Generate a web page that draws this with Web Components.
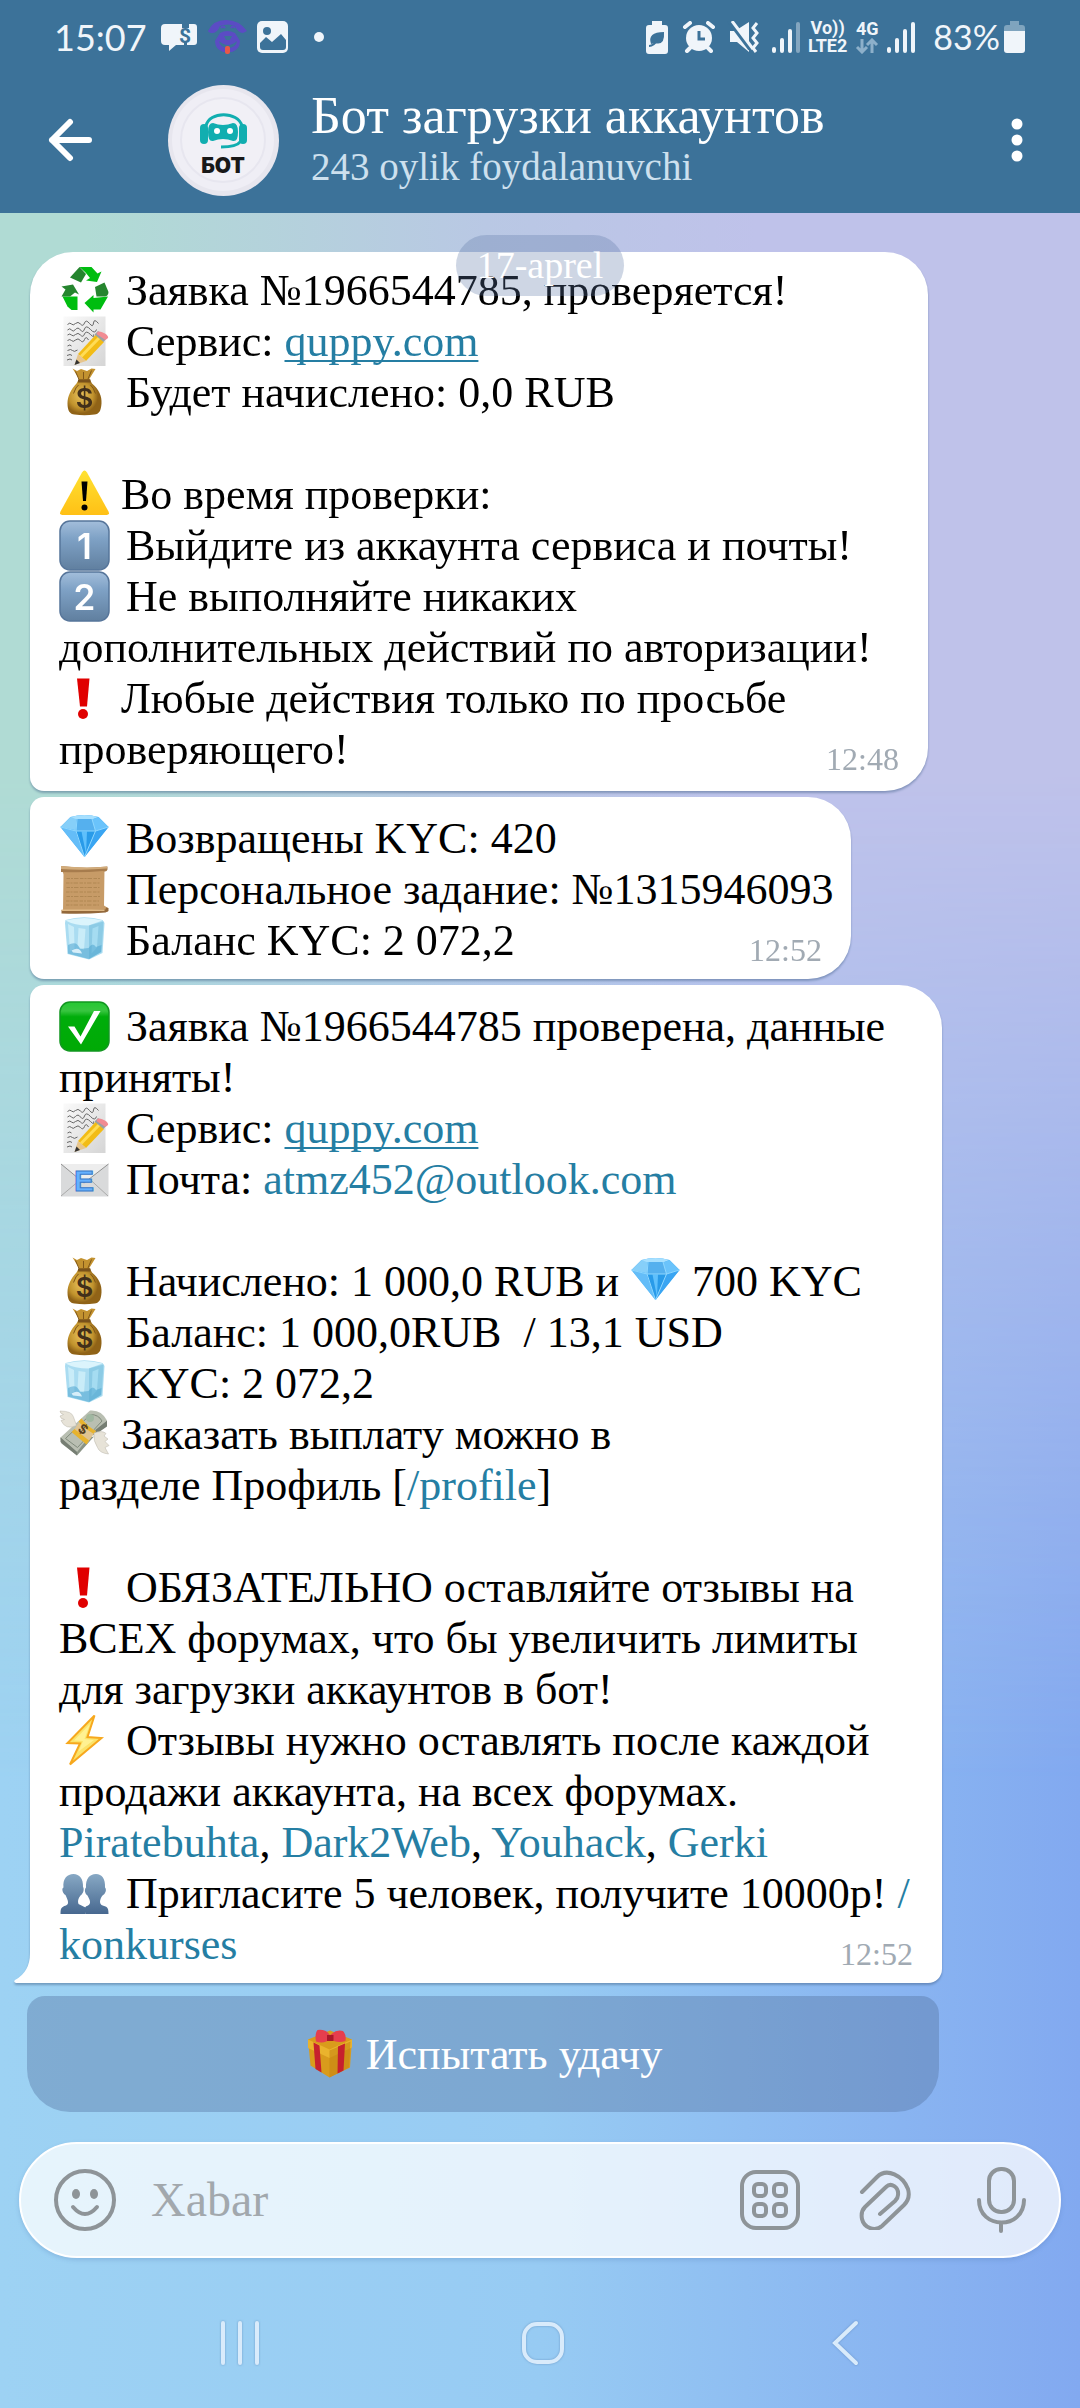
<!DOCTYPE html>
<html lang="uz">
<head>
<meta charset="utf-8">
<meta name="viewport" content="width=device-width, initial-scale=1">
<title>Бот загрузки аккаунтов</title>
<style>
html,body{margin:0}
body{font-family:"Liberation Serif",serif;color:#000}
</style>
</head>
<body>
<chat-app>
  <chat-header slot="header" name="Бот загрузки аккаунтов" status="243 oylik foydalanuvchi"></chat-header>
  <chat-history date="17-aprel">
    <chat-bubble time="12:48" style="--w:898px">
      <chat-line><emoji-icon name="recycle" wide></emoji-icon> Заявка №1966544785, проверяется!</chat-line>
      <chat-line><emoji-icon name="memo" wide></emoji-icon> Сервис: <chat-link to="http://quppy.com" underline>quppy.com</chat-link></chat-line>
      <chat-line><emoji-icon name="bag" wide></emoji-icon> Будет начислено: 0,0 RUB</chat-line>
      <chat-line></chat-line>
      <chat-line><emoji-icon name="warning"></emoji-icon> Во время проверки:</chat-line>
      <chat-line><emoji-icon name="one" wide></emoji-icon> Выйдите из аккаунта сервиса и почты!</chat-line>
      <chat-line><emoji-icon name="two" wide></emoji-icon> Не выполняйте никаких</chat-line>
      <chat-line>дополнительных действий по авторизации!</chat-line>
      <chat-line><emoji-icon name="bang"></emoji-icon> Любые действия только по просьбе</chat-line>
      <chat-line>проверяющего!</chat-line>
    </chat-bubble>
    <chat-bubble time="12:52" joined style="--w:821px">
      <chat-line><emoji-icon name="gem" wide></emoji-icon> Возвращены KYC: 420</chat-line>
      <chat-line><emoji-icon name="scroll" wide></emoji-icon> Персональное задание: №1315946093</chat-line>
      <chat-line><emoji-icon name="ice" wide></emoji-icon> Баланс KYC: 2 072,2</chat-line>
    </chat-bubble>
    <chat-bubble time="12:52" joined tail style="--w:912px">
      <chat-line><emoji-icon name="check" wide></emoji-icon> Заявка №1966544785 проверена, данные</chat-line>
      <chat-line>приняты!</chat-line>
      <chat-line><emoji-icon name="memo" wide></emoji-icon> Сервис: <chat-link to="http://quppy.com" underline>quppy.com</chat-link></chat-line>
      <chat-line><emoji-icon name="mail" wide></emoji-icon> Почта: <chat-link to="mailto:atmz452@outlook.com">atmz452@outlook.com</chat-link></chat-line>
      <chat-line></chat-line>
      <chat-line><emoji-icon name="bag" wide></emoji-icon> Начислено: 1 000,0 RUB и <emoji-icon name="gem"></emoji-icon> 700 KYC</chat-line>
      <chat-line><emoji-icon name="bag" wide></emoji-icon> Баланс: 1 000,0RUB&nbsp; / 13,1 USD</chat-line>
      <chat-line><emoji-icon name="ice" wide></emoji-icon> KYC: 2 072,2</chat-line>
      <chat-line><emoji-icon name="money"></emoji-icon> Заказать выплату можно в</chat-line>
      <chat-line>разделе Профиль [<chat-link to="#profile">/profile</chat-link>]</chat-line>
      <chat-line></chat-line>
      <chat-line><emoji-icon name="bang" wide></emoji-icon> ОБЯЗАТЕЛЬНО оставляйте отзывы на</chat-line>
      <chat-line>ВСЕХ форумах, что бы увеличить лимиты</chat-line>
      <chat-line>для загрузки аккаунтов в бот!</chat-line>
      <chat-line><emoji-icon name="bolt" wide></emoji-icon> Отзывы нужно оставлять после каждой</chat-line>
      <chat-line>продажи аккаунта, на всех форумах.</chat-line>
      <chat-line><chat-link to="#piratebuhta">Piratebuhta</chat-link>, <chat-link to="#dark2web">Dark2Web</chat-link>, <chat-link to="#youhack">Youhack</chat-link>, <chat-link to="#gerki">Gerki</chat-link></chat-line>
      <chat-line><emoji-icon name="people" wide></emoji-icon> Пригласите 5 человек, получите 10000р! <chat-link to="#konkurses">/</chat-link></chat-line>
      <chat-line><chat-link to="#konkurses">konkurses</chat-link></chat-line>
    </chat-bubble>
    <inline-button style="--w:912px"><emoji-icon name="gift"></emoji-icon> Испытать удачу</inline-button>
  </chat-history>
  <chat-composer slot="footer"></chat-composer>
  <system-nav slot="footer"></system-nav>
</chat-app>

<script>
const define = (name, html, setup) => customElements.define(name, class extends HTMLElement {
  constructor() {
    super();
    this.attachShadow({ mode: "open" });
  }
  connectedCallback() {
    this.shadowRoot.innerHTML = typeof html === "function" ? html(this) : html;
    if (setup) setup(this);
  }
});

const keycap = (n) => `<defs><linearGradient id="k" x2="0" y2="1"><stop stop-color="#a3bedb"/><stop offset=".35" stop-color="#7fa2c6"/><stop offset="1" stop-color="#607f9f"/></linearGradient></defs><rect x="1" y="1" width="98" height="98" rx="20" fill="url(#k)" stroke="#56759a" stroke-width="3"/><text x="50" y="76" text-anchor="middle" font-family="Inter,sans-serif" font-weight="600" font-size="70" fill="#fff">${n}</text>`;

/* Each picture is drawn on a 100 × 100 grid. */
const EMOJI = {
  recycle: `<g fill="#00bd10"><path d="M40 3h24l12 13 8-4-9 21-22-3 8-5-9-11-12-11z"/><path d="M6 62h30v27H24L16 82z"/><path d="M97 62L82 88H68v6L50 75l18-16v6z"/></g><g fill="#25852e"><path d="M40 3l13 14-10 17-22-10z"/><path d="M4 42l23-4 12 20-8-4-10 8H4l8-14z"/><path d="M71 43l19-9 8 19c0 5-3 9-8 9H74z"/></g>`,
  memo: `<defs><linearGradient id="m" x2="1" y2="1"><stop stop-color="#fafafa"/><stop offset="1" stop-color="#d5d5d5"/></linearGradient></defs><path d="M8 0h84v99H8z" fill="url(#m)"/><g fill="none" stroke="#666" stroke-width="2"><path d="M16 16q5-5 8-1t8-1 10 1 8-2 10 1 8-1 10 1"/><path d="M16 27q5-5 8 0t8-1 10 1 8-2 12 1 12 0"/><path d="M16 37q5-4 8 0t8-1 10 1 8-2 12 1 6 0"/><path d="M16 48q5-4 8 0t8-1 10 1 8-2 8 1"/><path d="M16 59q5-4 8 0M16 68q7-4 10 0t10-1M15 78q7-4 10 0M15 87q7-4 10 0"/></g><path d="M37 75L73 36l16 15-36 38z" fill="#f2bc16"/><path d="M43 80l37-38" stroke="#ffdc55" stroke-width="6"/><path d="M37 75l16 14-23 8z" fill="#e7c58d"/><path d="M34 86l7 7-11 4z" fill="#333"/><path d="M70 36l7-7 17 15-6 7z" fill="#9ba0a2"/><path d="M76 31c5-4 24 6 21 12l-5 4-18-12z" fill="#f18b92"/>`,
  bag: `<defs><radialGradient id="b" cx=".4" cy=".45"><stop stop-color="#e9c25b"/><stop offset=".7" stop-color="#c1932d"/><stop offset="1" stop-color="#906317"/></radialGradient></defs><path d="M26 2l9 5 8-4 12 4 9-5 8 1-13 21H40z" fill="#c3922f"/><path d="M39 23h21l5 9c14 12 20 25 19 40s-5 21-14 22q-20 3-40 0c-9-1-14-7-14-22s7-28 18-40z" fill="url(#b)"/><path d="M37 24h25v6H37z" fill="#79521b"/><path d="M39 24L32 8M48 23V9M57 23l7-17M28 52q5-14 10-17M72 52q-4-12-10-17" stroke="#805719" stroke-width="2" fill="none"/><text x="50" y="80" text-anchor="middle" font-family="Inter,sans-serif" font-weight="600" font-size="54" fill="#42301a">$</text>`,
  warning: `<defs><linearGradient id="w" x2="0" y2="1"><stop stop-color="#ffe231"/><stop offset="1" stop-color="#ffc016"/></linearGradient></defs><path d="M45 6q5-8 10 0l43 78q3 7-4 7H6q-7 0-4-7z" fill="url(#w)"/><path d="M44 24h12l-3 39h-6z"/><circle cx="50" cy="76" r="6"/>`,
  one: keycap(1),
  two: keycap(2),
  bang: `<path d="M35 10h25l-5 56H41z" fill="#e00000"/><circle cx="47" cy="81" r="10" fill="#e00000"/>`,
  gem: `<path d="M2 27L22 7q28-8 56 0l20 20-48 60z" fill="#44adf4"/><path d="M2 27L22 7l11 2 2 25z" fill="#86cff9"/><path d="M22 7q28-8 56 0L65 12H35z" fill="#a7e0ff"/><path d="M35 11h30l7 24H32z" fill="#55b0ee"/><path d="M78 7l20 20-26 8-7-23z" fill="#6ac3fb"/><path d="M2 27l31 8 17 52z" fill="#64bdf8"/><path d="M32 35h40L50 87z" fill="#299be9"/><path d="M44 36h11l-2 45z" fill="#5fc0fc"/><path d="M72 35l26-8-48 60z" fill="#3aa5f2"/><path d="M2 27l31 8h39l26-8M33 35l17 52 22-52M35 11l-2 24M65 11l7 24" fill="none" stroke="#8ed7ff" stroke-width="2"/>`,
  scroll: `<path d="M5 8h85l-1 74 8 5v7H7L8 20z" fill="#c79b67"/><path d="M3 3q48 6 93 1v6q-2 6-9 3-42 4-84 2z" fill="#a77c4d"/><path d="M3 3q48 5 92 1v4q-45 4-92 1z" fill="#d2ac7b"/><path d="M4 91q45 1 88-1l1-4 5 1v6l-6 3q-45 4-88 2z" fill="#93683a"/><path d="M4 90h86v3H4z" fill="#dfb985"/><g stroke="#b08753" stroke-width="2" stroke-dasharray="7 2 4 2 9 3"><path d="M14 28h67M13 37h68M14 46h66M13 55h68M14 64h67M13 73h66M13 81h66"/></g>`,
  ice: `<path d="M12 9Q50-2 86 9l4 6-4 60-27 13-43-11L11 15z" fill="#aadcf1"/><path d="M12 10Q50 0 86 10L58 20Q30 20 12 10z" fill="#dbf4fc"/><path d="M59 20l29-8-4 61-25 14z" fill="#8ccbe5"/><path d="M17 17l12 6 1 43-9 5zM38 25l14 2-3 42-13-7z" fill="#c9ecf8"/><path d="M66 26l12-5-3 43-11 12z" fill="#a5dcf1"/><path d="M17 59q18-10 24 8l17-2q8-13 15-2l11-4-1 14-24 14-42-11z" fill="#4fa6cf" opacity=".55"/><path d="M24 70q16-9 21 6l-18-2z" fill="#eefaff" opacity=".8"/>`,
  check: `<defs><linearGradient id="c" x2="0" y2="1"><stop stop-color="#24c832"/><stop offset=".18" stop-color="#38c540"/><stop offset=".3" stop-color="#00ad0b"/><stop offset="1" stop-color="#00aa05"/></linearGradient></defs><rect x="1" y="1" width="98" height="98" rx="20" fill="url(#c)" stroke="#129620" stroke-width="3"/><path d="M17 50h13l12 20 27-51h13L43 86z" fill="#fff"/>`,
  mail: `<path d="M3 19h95v65H3z" fill="#d9dadb"/><path d="M3 19l46 38 49-38" fill="#ededed" stroke="#929292" stroke-width="2"/><path d="M3 83l38-32M97 83L60 49" stroke="#aaa" stroke-width="2"/><g font-family="Liberation Sans,sans-serif" font-weight="700" font-size="60" text-anchor="middle"><text x="49" y="72" fill="#65b1ff" stroke="#3979c9" stroke-width="2">E</text></g>`,
  money: `<path d="M40 60L2 56l2 12 31 24 34-38z" fill="#8a9386"/><path d="M2 56L61 2q23-2 34 20L64 48 35 85z" fill="#b9bfb2"/><path d="M95 22v12L69 52l-5-5zM2 56l33 29v7L2 65z" fill="#767e73"/><path d="M12 58L62 10q16 0 23 13L36 76z" fill="none" stroke="#818c7d" stroke-width="2"/><circle cx="61" cy="17" r="8" fill="#a0b7a1"/><path d="M44 18q13 17 29 25L55 68 27 44z" fill="#dfc491"/><path d="M44 18q13 17 29 25l-4 6Q51 39 38 24zM30 39l29 23-5 8-30-25z" fill="#e6b32e"/><text x="46" y="50" transform="rotate(35 49 42)" font-family="Inter,sans-serif" font-weight="700" font-size="26" fill="#554020" text-anchor="middle">$</text><g fill="#e7e3d8" stroke="#b9b4a9"><path d="M1 3q24 0 27 12l6 17Q12 42 3 22l7-2Q2 19 1 13l7-3Q1 8 1 3z"/><path d="M69 47q17-6 24 1l-4 5 8 6-6 5 8 8-8 4 7 13q-18-2-22-13-9-13-7-29z"/></g>`,
  bolt: `<path d="M70 0L16 55l25 1L21 98l63-53-28-2z" fill="#fbe36a" stroke="#f7a81d" stroke-width="4"/><path d="M61 17L29 50l18 1-9 21 31-23-19-2z" fill="#fff192"/>`,
  people: `<defs><linearGradient id="p" gradientUnits="userSpaceOnUse" x1="0" y1="10" x2="0" y2="91"><stop stop-color="#88a9c5"/><stop offset="1" stop-color="#47688f"/></linearGradient></defs><g fill="url(#p)"><path d="M28 11c-13 0-22 10-20 27-5 2-1 13 4 15 5 11 8 18 1 21C3 77 2 80 2 91h50V78L38 71c-2-5-1-11 4-17 6-4 8-13 5-17 1-16-7-26-19-26z"/><path d="M73 11c-13 0-21 10-20 27-4 4-2 13 3 16 5 9 8 16 1 20-6 2-8 4-5 17h46c0-15-3-14-14-18-5-5-3-12 2-19 6-3 9-12 5-16 1-17-6-27-18-27z"/></g>`,
  gift: `<path d="M7 20l44-18 44 18-4 56-41 20-38-24z" fill="#d99b1c"/><path d="M7 20l43 20 45-20v16L50 57 7 37z" fill="#eab32d"/><path d="M50 42l42-18-3 52-39 20z" fill="#c78612" opacity=".6"/><path d="M18 26l12 6 4 54-12-7zM67 34l14-6-3 54-12 6z" fill="#c6202d"/><path d="M26 1q18-2 25 11Q63-1 77 3q7 7 5 20-18 6-30-5-12 12-29 6-3-15 3-23z" fill="#e63e4d"/><path d="M45 11h13v12H45z" fill="#ab1829"/>`
};

define("emoji-icon", (el) => `<style>
:host{display:inline-block;width:51px;height:51px;vertical-align:top}
:host([wide]){margin-right:5px}
svg{display:block;width:100%;height:100%}
</style><svg viewBox="-1 -1 102 102" aria-hidden="true">${EMOJI[el.getAttribute("name")]}</svg>`);

define("chat-link", (el) => `<style>
:host{display:inline}
a{color:#257ea3;text-decoration:none}
:host([underline]) a{text-decoration:underline;text-decoration-thickness:2px;text-underline-offset:4px;text-decoration-skip-ink:none}
</style><a href="${el.getAttribute("to")}"><slot></slot></a>`);

define("chat-line", `<style>
:host{display:block;min-height:51px;font-size:44px;line-height:51px;white-space:nowrap}
</style><slot></slot>`);

define("chat-bubble", (el) => `<style>
:host{display:block;width:var(--w);max-width:100%;filter:drop-shadow(0 2px 1px rgba(60,90,130,.45))}
.box{position:relative;display:grid;background:#fff;border-radius:43px 43px 43px 14px;padding:13px 29px 16px}
:host([joined]) .box{border-top-left-radius:14px;padding:16px 29px 13px}
:host([tail]) .box{border-bottom-right-radius:14px;border-bottom-left-radius:0}
.text,time{grid-area:1/1;min-width:0}
time{align-self:end;justify-self:end;font-size:32px;line-height:32px;color:#a1aab3}
.tail{position:absolute;right:100%;bottom:0;width:16px;height:30px;fill:#fff;display:none}
:host([tail]) .tail{display:block}
</style><div class="box"><div class="text"><slot></slot></div><time>${el.getAttribute("time")}</time>
<svg class="tail" viewBox="0 0 16 30"><path d="M16 0q0 19-15 27-2 2 1 3h15V0z"/></svg></div>`);

define("inline-button", `<style>
:host{display:block;width:var(--w);max-width:100%;margin:7px 0 0 -3px}
button{display:block;width:100%;height:116px;border:0;border-radius:18px 18px 43px 43px;background:rgba(84,116,160,.4);color:#fff;font:44px/51px "Liberation Serif",serif;padding:0}
</style><button type="button"><slot></slot></button>`);

define("chat-history", (el) => `<style>
:host{display:block;position:relative}
.list{display:flex;flex-direction:column;gap:6px;padding:39px 0 30px 30px}
.date{position:absolute;top:22px;left:0;right:0;display:flex;justify-content:center}
.date span{background:rgba(92,120,165,.3);color:#fff;border-radius:31px;font-size:38px;line-height:43px;padding:9px 21px}
</style><div class="list"><slot></slot></div><div class="date"><span>${el.getAttribute("date")}</span></div>`);

const bars = (last) => `<svg width="28" height="32" viewBox="0 0 28 32" stroke="#f0f5fa" stroke-width="4" stroke-linecap="round"><path d="M2 28v2M10 19v11M18 10v20"/><path d="M26 3v27" opacity="${last}"/></svg>`;
define("chat-header", (el) => `<style>
:host{display:block;background:#3c7299;color:#fff}
.status{display:flex;align-items:center;height:74px;padding:0 55px 0 54px;font-family:Lato,sans-serif;color:#f0f5fa}
.status svg{display:block;flex:none}
.clock{font-size:36px;line-height:36px;margin-right:14px}
.left,.right{display:flex;align-items:center}
.left{gap:10px}.right{margin-left:auto;gap:8px}
.net{font:700 18px/18px Roboto,sans-serif;text-align:center}
.pct{font-size:34px;line-height:36px;margin:0 -4px 0 10px}
.bar{display:flex;align-items:center;height:132px;padding:0 44px 7px 38px}
button{border:0;background:none;padding:0;color:inherit;display:flex;align-items:center;justify-content:center}
.back{width:64px;height:64px}
.avatar{width:111px;height:111px;margin:0 32px 0 66px}
.who{flex:1;display:flex;flex-direction:column;gap:4px}
h1{font-size:52px;line-height:50px;font-weight:400;margin:0}
p{font-size:39px;line-height:44px;margin:0;color:#cde0ee}
.more{width:38px;height:64px}
</style>
<div class="status">
  <div class="clock">15:07</div>
  <div class="left">
    <svg width="37" height="28" viewBox="0 0 37 28" fill="#f0f5fa"><path d="M4 1h17v4h7V1h5q3 0 3 3v15q0 3-3 3h-7v-3h-3v3h-8l-7 6v-6H4q-4 0-4-4V5q0-4 4-4z"/><text x="18" y="20" font-family="Roboto,sans-serif" font-weight="700" font-size="21" fill="#3c7299">$</text></svg>
    <svg width="39" height="36" viewBox="0 0 39 36"><g fill="#5b4cc4"><path d="M0 12Q5 1 18 1t21 11l-4 2q-5 0-8-7-7-3-15 0-3 7-7 7-4 0-5-2z"/><path d="M12 14q7-4 15 0l5 8q0 8-8 11h-9q-8-3-8-11z"/></g><path d="M11 22q9 8 18 0-1 7-9 7t-9-7zM16 17h8l-2 4h-4z" fill="#3c7299"/><path d="M13 9q2-3 4 0M23 9q2-3 4 0" fill="none" stroke="#5b4cc4" stroke-width="2"/><rect x="17" y="27" width="5" height="8" rx="2" fill="#e75849"/></svg>
    <svg width="32" height="32" viewBox="0 0 32 32"><rect width="31" height="32" rx="5" fill="#f0f5fa"/><circle cx="10" cy="10" r="4" fill="#3c7299"/><path d="M3 26v-4l6-6 6 5 9-8 5 6v7q0 3-3 3H6q-3 0-3-3z" fill="#3c7299"/></svg>
    <svg width="36" height="32" viewBox="0 0 36 32"><circle cx="20" cy="16" r="5" fill="#f0f5fa"/></svg>
  </div>
  <div class="right">
    <svg width="22" height="33" viewBox="0 0 22 33"><path d="M6 0h10v4h3q3 0 3 3v23q0 3-3 3H3q-3 0-3-3V7q0-3 3-3h3z" fill="#f0f5fa"/><path d="M5 23Q1 11 18 11q1 14-9 11z" fill="#3c7299"/><path d="M3 25q5 0 9-7" fill="none" stroke="#3c7299" stroke-width="2"/></svg>
    <svg width="42" height="32" viewBox="-8 0 42 32"><circle cx="15" cy="17" r="13" fill="#f0f5fa"/><path d="M1 6l5-4M29 6l-5-4M6 27l-3 3M24 27l3 3" stroke="#f0f5fa" stroke-width="4" stroke-linecap="round"/><path d="M15 10v8h6" fill="none" stroke="#3c7299" stroke-width="3"/></svg>
    <svg width="38" height="32" viewBox="-3 0 38 32"><path d="M1 10h5L20 1v30L8 21H1z" fill="#f0f5fa"/><path d="M0 0l21 28" stroke="#3c7299" stroke-width="4"/><path d="M3 0l21 28" stroke="#f0f5fa" stroke-width="3"/><path d="M28 2l-4 5 4 5-4 5 4 5-4 5 3 4" fill="none" stroke="#f0f5fa" stroke-width="3"/></svg>
    ${bars(.4)}
    <div class="net">Vo))<br>LTE2</div>
    <div class="net">4G<svg width="24" height="16" viewBox="0 0 24 16" fill="none" stroke="#8db0ca" stroke-width="3"><path d="M7 1v12M2 9l5 5 5-5M17 15V3M12 7l5-5 5 5"/></svg></div>
    ${bars(1)}
    <div class="pct">83%</div>
    <svg width="21" height="32" viewBox="0 0 21 32"><path d="M6 0h9v4h3q3 0 3 3v3H0V7q0-3 3-3h3z" fill="#7fa4be"/><path d="M0 10h21v19q0 3-3 3H3q-3 0-3-3z" fill="#f0f5fa"/></svg>
  </div>
</div>
<div class="bar">
  <button class="back" aria-label="Orqaga"><svg width="44" height="44" viewBox="0 0 44 44" fill="none" stroke="#fff" stroke-width="6" stroke-linecap="round" stroke-linejoin="round"><path d="M41 22H4M22 4L4 22l18 18"/></svg></button>
  <svg class="avatar" viewBox="0 0 111 111"><circle cx="55.500" cy="55.500" r="55.500" fill="#e7e6ee"/><circle cx="55" cy="55" r="51" fill="#efeef5"/><circle cx="55" cy="55" r="42" fill="#f1f0f6" stroke="#e7e6ef" stroke-width="2"/><g fill="#11aeb0"><rect x="32" y="39" width="8" height="20" rx="4"/><rect x="71" y="39" width="8" height="20" rx="4"/><path d="M45 38q10 4 20 0 5 0 5 9 0 10-5 9-10-4-20 0-5 1-5-9 0-9 5-9z"/></g><path d="M38 41c3-15 32-15 36 0M73 56q-4 6-20 6" fill="none" stroke="#11aeb0" stroke-width="3"/><g fill="#fff"><circle cx="49" cy="46" r="3"/><circle cx="62" cy="46" r="3"/></g><text x="55" y="88" text-anchor="middle" font-family="Inter,sans-serif" font-weight="900" font-size="21" fill="#181818">БОТ</text></svg>
  <div class="who"><h1>${el.getAttribute("name")}</h1><p>${el.getAttribute("status")}</p></div>
  <button class="more" aria-label="Menyu"><svg width="12" height="44" viewBox="0 0 12 44" fill="#fff"><circle cx="6" cy="6" r="5.500"/><circle cx="6" cy="22" r="5.500"/><circle cx="6" cy="38" r="5.500"/></svg></button>
</div>`);

define("chat-composer", `<style>
:host{display:block;padding:0 19px}
form{display:flex;align-items:center;height:116px;box-sizing:border-box;border-radius:58px;background:rgba(255,255,255,.75);border:2px solid #fff;padding:0 31px 0 32px;box-shadow:0 2px 4px rgba(70,110,170,.25)}
button{border:0;background:none;padding:0;display:flex;flex:none}
svg{display:block;fill:none;stroke:#8e9498;stroke-width:4;stroke-linecap:round}
input{flex:1;min-width:0;margin-left:34px;border:0;background:none;outline:0;padding:0;height:60px;font:48px/60px "Liberation Serif",serif;color:#333}
input::placeholder{color:#a2a8ad;opacity:1}
.end{display:flex;align-items:center;gap:56px}
</style>
<form>
  <button type="button" aria-label="Emoji"><svg width="64" height="64" viewBox="0 0 64 64"><circle cx="32" cy="32" r="29"/><path d="M20 39q12 14 24 0"/><g fill="#8e9498" stroke="none"><ellipse cx="23" cy="26" rx="4" ry="5"/><ellipse cx="41" cy="26" rx="4" ry="5"/></g></svg></button>
  <input type="text" placeholder="Xabar" aria-label="Xabar">
  <div class="end">
    <button type="button" aria-label="Buyruqlar"><svg width="60" height="60" viewBox="0 0 60 60"><rect x="2" y="2" width="56" height="56" rx="14"/><rect x="14" y="14" width="12" height="12" rx="4"/><rect x="34" y="14" width="12" height="12" rx="4"/><rect x="14" y="34" width="12" height="12" rx="4"/><rect x="34" y="34" width="12" height="12" rx="4"/></svg></button>
    <button type="button" aria-label="Biriktirish"><svg width="60" height="60" viewBox="0 0 60 60"><path d="M6 22L21 7c10-10 26-1 31 12 2 7 0 12-4 16L26 56c-7 6-18 2-20-7-1-5 0-9 3-12l21-20c5-5 13 0 12 8 0 3-1 4-3 6L24 44"/></svg></button>
    <button type="button" aria-label="Ovozli xabar"><svg width="56" height="66" viewBox="0 0 56 66"><rect x="17" y="2" width="25" height="43" rx="12"/><path d="M7 33c0 30 45 30 45 0M29 56v8"/></svg></button>
  </div>
</form>`);

define("system-nav", `<style>
:host{display:block}
nav{display:flex;align-items:center;justify-content:space-between;height:150px;padding:20px 197px 0 202px;box-sizing:border-box}
button{border:0;background:none;padding:0;width:76px;height:76px;display:flex;align-items:center;justify-content:center}
svg{display:block;fill:none;stroke:#d9ebfb;stroke-width:4;stroke-linecap:round;filter:drop-shadow(0 0 1px rgba(70,110,160,.5))}
</style>
<nav>
  <button aria-label="Oxirgi ilovalar"><svg width="42" height="46" viewBox="0 0 42 46"><path d="M4 3v40M21 3v40M38 3v40"/></svg></button>
  <button aria-label="Bosh ekran"><svg width="44" height="44" viewBox="0 0 44 44"><rect x="3" y="3" width="38" height="38" rx="13"/></svg></button>
  <button aria-label="Orqaga"><svg width="28" height="46" viewBox="0 0 28 46"><path d="M25 3L4 23l21 20"/></svg></button>
</nav>`);

define("chat-app", `<style>
:host{display:flex;flex-direction:column;min-height:100vh;position:relative;isolation:isolate;background:linear-gradient(to right,#9dd2f3,#97cbf3 50%,#82a9f0)}
:host::before{content:"";position:absolute;inset:0;z-index:-1;background:linear-gradient(to right,#b0dbd4 8%,#b9c8e4 45%,#bfc2ea 70%);mask-image:linear-gradient(to bottom,#000 32%,transparent 74%)}
main{flex:none}
footer{margin-bottom:auto}
</style><slot name="header"></slot><main><slot></slot></main><footer><slot name="footer"></slot></footer>`);
</script>
</body>
</html>
